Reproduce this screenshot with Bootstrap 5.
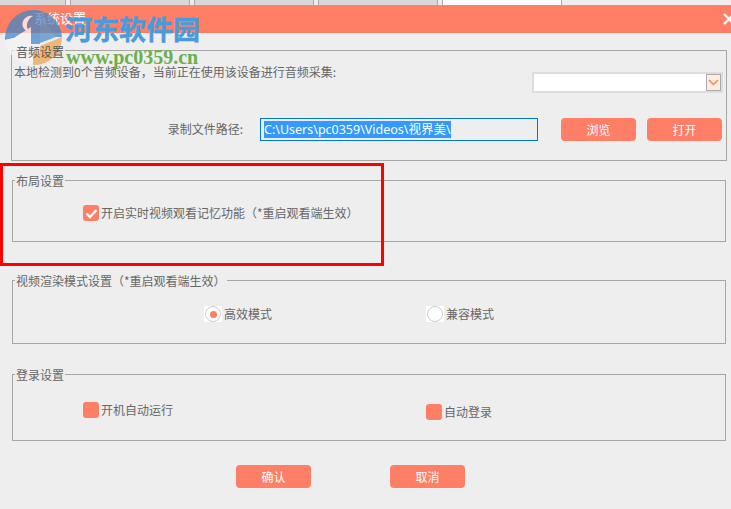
<!DOCTYPE html>
<html lang="zh">
<head>
    <meta charset="UTF-8">
    <title>系统设置</title>
    <link href="https://cdn.jsdelivr.net/npm/bootstrap@5.3.0/dist/css/bootstrap.min.css" rel="stylesheet">
    <style>
        html, body { margin: 0; height: 509px; overflow: hidden; }
        body {
            background: #eeeeee;
            color: #666;
            font: 12px/16px "Noto Sans CJK SC", "Liberation Sans", sans-serif;
            position: relative;
            text-spacing-trim: space-all;
        }
        /* tabs strip behind the dialog */
        .tab-strip { height: 5px; display: flex; background: #eee; }
        .tab-piece { background: #d8d8d8; border: 1px solid #aaa; border-width: 0 1px; margin-right: 4px; width: 120px; }
        .tab-piece.is-first { width: 66px; border-left: 0; }
        .tab-piece.is-on { background: #fff; }
        .title-bar {
            height: 28px; background: #ff7e66; color: #fff; font-size: 13px;
            border-top: 1px solid #b5a09c;
            padding: 4px 0 0 34px; position: relative;
        }
        .close-x { position: absolute; right: 0; top: 7px; }
        .dlg-body { padding: 17px 5px 0 12px; }
        .grp {
            border: 1px solid #a6a6a6;
            position: relative;
        }
        .grp-title {
            position: absolute; left: 2px; top: -8px;
            background: #eee; padding: 0 1px; white-space: nowrap; line-height: 16px;
        }
        .grp-audio { height: 111px; padding: 0 0 0 2px; margin: 0 -1px; }
        /* the legend sits above the watermark, so it has no fill of its own */
        .grp-audio .grp-title { left: 3px; top: -7px; background: transparent; color: #555; z-index: 5; }
        .grp-audio::before {
            content: ""; position: absolute; left: 3px; top: -1px; width: 50px; height: 1px; background: #eee;
        }
        .grp-layout { height: 62px; margin-top: 19px; }
        .grp-video { height: 64px; margin-top: 38px; }
        .grp-login { height: 67px; margin-top: 30px; }
        .audio-line { padding-top: 13px; height: 67px; }
        .audio-pick {
            position: absolute; left: 520px; top: 21px; width: 191px; height: 21px;
            background: #fff; border: 2px solid #ddd;
        }
        .pick-arrow {
            position: absolute; right: 0; top: 0; width: 15px; height: 17px;
            background: #fdeedd; border: 1px solid #aaa;
            display: flex; align-items: center; justify-content: center;
        }
        .path-label { width: 246px; text-align: right; padding: 3px 17px 0 0; }
        .path-input {
            width: 278px; height: 23px; border: 1px solid #0078d7; background: #eee;
            padding: 2px 0 0 3px; margin-right: 23px; white-space: nowrap; overflow: hidden;
            font: 12.5px/17px "Noto Sans", "Noto Sans CJK SC", sans-serif;
        }
        .path-input span { background: #3399ff; color: #fff; display: inline-block; height: 17px; }
        .salmon-btn {
            width: 75px; height: 23px; background: #ff7e66; color: #fff; border: 0;
            border-radius: 4px; padding: 0; font-size: 12px; line-height: 23px; flex-shrink: 0;
        }
        .btn-next { margin-left: 11px; }
        .box-line { position: absolute; display: flex; align-items: center; gap: 2px; white-space: nowrap; }
        .tick {
            width: 16px; height: 16px; background: #ff7e66; border-radius: 3px;
            display: flex; align-items: center; justify-content: center;
        }
        .dot-wrap {
            width: 18px; height: 16px; background: #fff; display: flex;
            align-items: center; justify-content: center;
        }
        .dot-ring {
            width: 16px; height: 16px; border: 1px solid #ccc; border-radius: 50%;
            display: flex; align-items: center; justify-content: center;
        }
        .dot-ring i { width: 7px; height: 7px; border-radius: 50%; background: #ff7e66; display: block; }
        .foot-row { margin-top: 24px; padding-left: 224px; gap: 79px; }
        /* screenshot overlays */
        .red-frame {
            position: absolute; left: 0; top: 163px; width: 384px; height: 103px;
            border: 3px solid #f00; pointer-events: none;
        }
        .wm-logo { position: absolute; left: 4px; top: 10px; opacity: .72; }
        .wm-name {
            position: absolute; left: 65px; top: 13px; color: #4a9bdc;
            font: bold 27px/32px "Noto Sans CJK SC", serif;
            -webkit-text-stroke: .4px #4a9bdc;
        }
        .wm-url {
            position: absolute; left: 66px; top: 47px; color: #6ab04c;
            font: bold 20px/20px "Liberation Serif", serif;
        }
    </style>
</head>
<body>
    <div class="tab-strip">
        <div class="tab-piece is-first"></div>
        <div class="tab-piece"></div>
        <div class="tab-piece"></div>
        <div class="tab-piece"></div>
        <div class="tab-piece is-on"></div>
    </div>
    <div class="title-bar">系统设置
        <svg class="close-x" width="8" height="12" viewBox="0 0 8 12"><path d="M1 1 L11 11 M11 1 L1 11" stroke="#fff" stroke-width="2.4" fill="none"/></svg>
    </div>
    <div class="dlg-body">
        <div class="grp grp-audio">
            <div class="grp-title">音频设置</div>
            <div class="audio-line">本地检测到0个音频设备，当前正在使用该设备进行音频采集:</div>
            <div class="audio-pick">
                <div class="pick-arrow"><svg width="11" height="7" viewBox="0 0 11 7"><path d="M1 1 L5.5 5.5 L10 1" stroke="#ff7e66" stroke-width="1.5" fill="none"/></svg></div>
            </div>
            <div class="d-flex">
                <div class="path-label">录制文件路径:</div>
                <div class="path-input"><span>C:\Users\pc0359\Videos\视界美\</span></div>
                <button class="salmon-btn" type="button">浏览</button>
                <button class="salmon-btn btn-next" type="button">打开</button>
            </div>
        </div>
        <div class="grp grp-layout">
            <div class="grp-title">布局设置</div>
            <div class="box-line" style="left:70px;top:24px">
                <span class="tick"><svg width="13" height="11" viewBox="0 0 13 11"><path d="M1.5 5.5 L5 9 L11.5 2" stroke="#fff" stroke-width="2.4" fill="none"/></svg></span>
                开启实时视频观看记忆功能（*重启观看端生效）
            </div>
        </div>
        <div class="grp grp-video">
            <div class="grp-title">视频渲染模式设置（*重启观看端生效）</div>
            <div class="box-line" style="left:191px;top:25px">
                <span class="dot-wrap"><span class="dot-ring"><i></i></span></span>高效模式
            </div>
            <div class="box-line" style="left:413px;top:25px">
                <span class="dot-wrap"><span class="dot-ring"></span></span>兼容模式
            </div>
        </div>
        <div class="grp grp-login">
            <div class="grp-title">登录设置</div>
            <div class="box-line" style="left:70px;top:27px"><span class="tick"></span>开机自动运行</div>
            <div class="box-line" style="left:413px;top:29px"><span class="tick"></span>自动登录</div>
        </div>
        <div class="d-flex foot-row">
            <button class="salmon-btn" type="button">确认</button>
            <button class="salmon-btn" type="button">取消</button>
        </div>
    </div>
    <div class="red-frame"></div>
    <svg class="wm-logo" width="60" height="56" viewBox="0 0 60 56">
        <path d="M1 30 A28 28 0 0 1 58 27 L48 27 L40 10 L36 10 L36 34 L27 34 L27 17 L10 28 Z" fill="#3f86c8"/>
        <path d="M1 30 L10 28 L27 17 L27 40 L36 36 L36 55 L29 55 A28 28 0 0 1 1 30 Z" fill="#f4f4f4"/>
        <path d="M36 36 L58 27 A28 28 0 0 1 29 55 L29 44 L36 44 Z" fill="#f0a24a"/>
        <path d="M36 10 L40 10 L52 27 L36 33 Z" fill="#4a8cc8"/>
        <path d="M24 9 C18 12 16 20 20 24 C16 24 12 20 14 14 C16 10 20 8 24 9 Z" fill="#fff" transform="translate(5 -3)"/>
    </svg>
    <div class="wm-name">河东软件园</div>
    <div class="wm-url">www.pc0359.cn</div>
</body>
</html>
